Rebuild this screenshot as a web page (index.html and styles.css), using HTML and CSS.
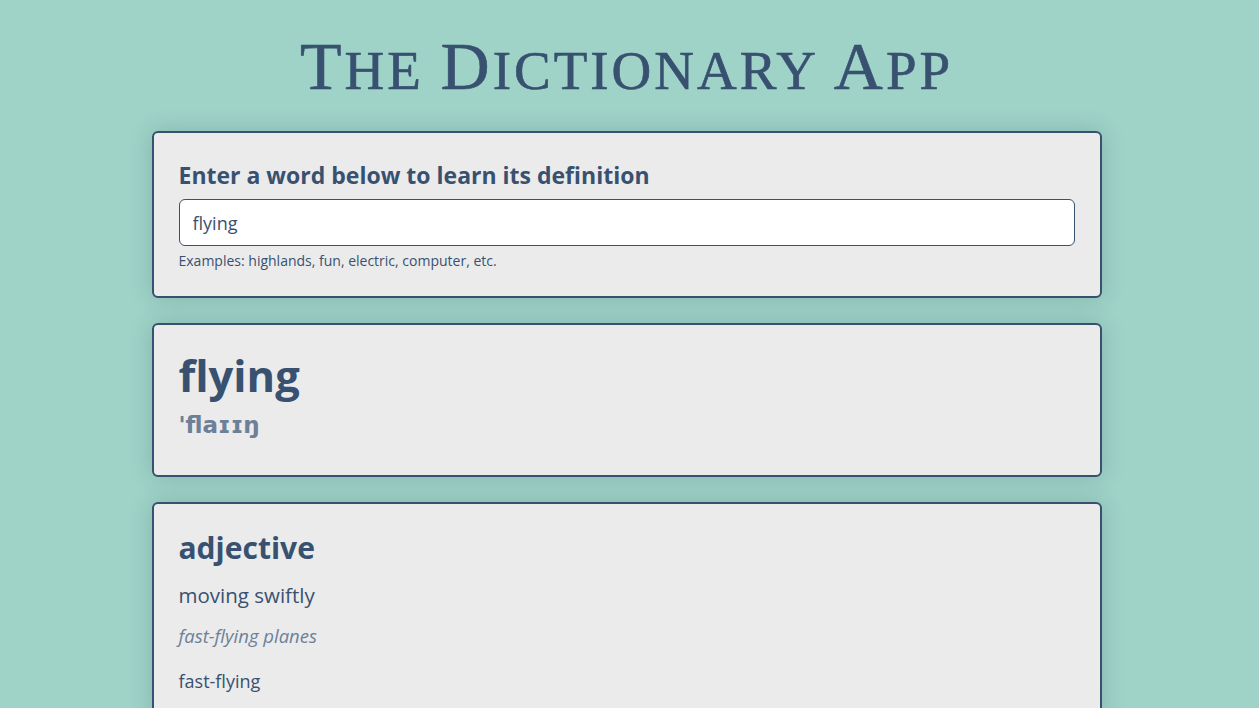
FILE: index.html
```html
<!DOCTYPE html>
<html lang="en">
<head>
<meta charset="utf-8">
<title>The Dictionary App</title>
<link rel="stylesheet" href="styles.css">
</head>
<body>
<main class="app">
  <h1 class="title"><span class="cap">T</span>he <span class="cap">D</span>ictionary <span class="cap">A</span>pp</h1>
  <section class="card search">
    <h2 class="search-label">Enter a word below to learn its definition</h2>
    <input class="search-input" type="text" value="flying">
    <p class="hint">Examples: highlands, fun, electric, computer, etc.</p>
  </section>
  <section class="card word-card">
    <h2 class="word">flying</h2>
    <p class="phonetic">'flaɪɪŋ</p>
  </section>
  <section class="card meaning">
    <h3 class="pos">adjective</h3>
    <p class="definition">moving swiftly</p>
    <p class="example">fast-flying planes</p>
    <p class="synonym">fast-flying</p>
  </section>
</main>
</body>
</html>
```
FILE: styles.css
```css
html, body {
  margin: 0;
  padding: 0;
}
body {
  background: #9fd3c7;
  color: #385170;
  font-family: "Open Sans", Lato, sans-serif;
  overflow: hidden;
  padding-right: 6px;
}
.app {
  width: 950px;
  margin: 0 auto;
  display: flex;
  flex-direction: column;
  gap: 25px;
  padding-top: 30px;
}
.title {
  margin: 0 0 -1px;
  text-align: center;
  font-family: "Liberation Serif", serif;
  font-weight: 400;
  font-size: 55px;
  line-height: 72px;
  letter-spacing: 3px;
  text-transform: uppercase;
  color: #385170;
  -webkit-text-stroke: 0.6px #385170;
}
.title .cap {
  font-size: 68px;
}
.card {
  background: #ebebeb;
  border: 2px solid #385170;
  border-radius: 6px;
  box-shadow: 0 0 22px rgba(40, 70, 80, 0.22);
  padding: 25px 25px;
}
.search {
  padding-top: 26px;
  padding-bottom: 26px;
}
.search-label {
  margin: 0 0 8px;
  font-size: 23px;
  line-height: 32px;
  font-weight: 700;
}
.search-input {
  display: block;
  box-sizing: border-box;
  width: 100%;
  height: 47px;
  border: 1px solid #385170;
  border-radius: 6px;
  background: #fff;
  padding: 0 13px;
  font-family: inherit;
  font-size: 18px;
  color: #385170;
  outline: none;
}
.hint {
  margin: 6px 0 0;
  font-size: 14px;
  line-height: 18px;
}
.word-card {
  padding-top: 26px;
  padding-bottom: 36px;
}
.word {
  margin: 0;
  font-size: 43.5px;
  line-height: 50px;
  font-weight: 700;
}
.phonetic {
  margin: 10px 0 0;
  font-family: "DejaVu Sans", "Open Sans", sans-serif;
  font-size: 23px;
  line-height: 28px;
  font-weight: 700;
  color: #6d8098;
}
.meaning {
  padding-top: 23px;
}
.pos {
  margin: 0 0 12px;
  font-size: 30px;
  line-height: 42px;
  font-weight: 700;
}
.definition {
  margin: 0 0 14px;
  font-size: 20.5px;
  line-height: 28px;
}
.example {
  margin: 0 0 19px;
  font-size: 18.5px;
  line-height: 26px;
  font-style: italic;
  color: #6d8098;
}
.synonym {
  margin: 0;
  font-size: 18px;
  line-height: 26px;
}
```
